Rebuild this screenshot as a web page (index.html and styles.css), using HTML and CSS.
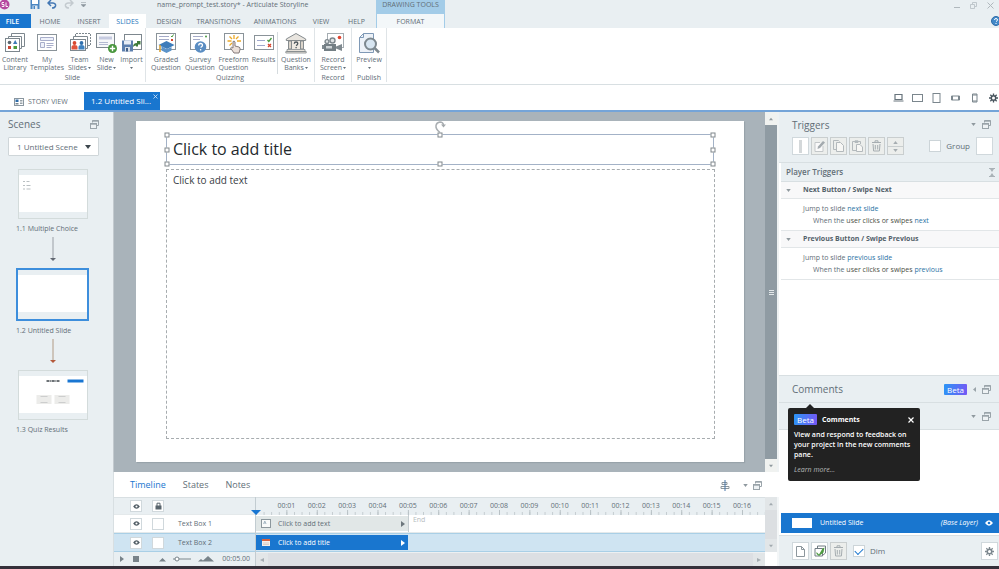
FILE: index.html
```html
<!DOCTYPE html>
<html lang="en">
<head>
<meta charset="utf-8">
<title>name_prompt_test.story* - Articulate Storyline</title>
<link rel="stylesheet" href="styles.css">
</head>
<body>
<svg class="defs" width="0" height="0" aria-hidden="true">
  <symbol id="panes" viewBox="0 0 9 9"><path d="M2.500 2.500V.5h6v5h-2" fill="none" stroke="#9aa4aa"/><path d="M2.500 1h6" stroke="#9aa4aa" stroke-width="1.400"/><rect x=".5" y="3.500" width="6" height="5" fill="#eef2f4" stroke="#9aa4aa"/><path d="M.5 4h6" stroke="#9aa4aa" stroke-width="1.400"/></symbol>
  <symbol id="down" viewBox="0 0 6 4"><path d="M0 0h6L3 4z" fill="currentColor"/></symbol>
  <symbol id="up" viewBox="0 0 6 4"><path d="M0 4h6L3 0z" fill="currentColor"/></symbol>
  <symbol id="eye" viewBox="0 0 8 6"><path d="M0 3Q4-2.400 8 3 4 8.400 0 3z" fill="currentColor"/><circle cx="4" cy="3" r="1.300" fill="var(--hole,#fff)"/></symbol>
  <symbol id="trash" viewBox="0 0 11 12"><path d="M1 2.500h9M4 2V.8h3V2M2 4l.6 7h5.800L9 4M4.300 5v4.500M6.700 5v4.500" fill="none" stroke="currentColor"/></symbol>
  <symbol id="gear" viewBox="0 0 12 12"><circle cx="6" cy="6" r="3" fill="none" stroke="currentColor" stroke-width="2"/><path d="M6 0v2.500M6 9.500V12M0 6h2.500M9.500 6H12M1.800 1.800l1.700 1.700M8.500 8.500l1.700 1.700M10.200 1.800L8.500 3.500M3.500 8.500l-1.700 1.700" stroke="currentColor" stroke-width="1.800"/></symbol>
</svg>

<header class="titlebar">
  <div class="quick">
    <svg class="logo" width="10" height="10" viewBox="0 0 10 10"><circle cx="4.500" cy="4.500" r="5" fill="#b5479f"/><path d="M4 2.500H2v2h2v2H1.800M6 2.500v4h2" fill="none" stroke="#fff" stroke-width=".9"/></svg>
    <button aria-label="Save"><svg width="10" height="10" viewBox="0 0 10 10"><path d="M.5 0h9v9h-9z" fill="#4b86c2"/><path d="M2 0h6v4H2z" fill="#fff"/><path d="M2.500 5.500h5V9h-5z" fill="#dfeaf4"/><path d="M3.500 6h1.500v3H3.500z" fill="#4b86c2"/></svg></button>
    <button aria-label="Undo"><svg width="10" height="9" viewBox="0 0 10 9"><path d="M4 0L1 3l3 3M1 3h5q3 .3 2.500 3Q8 8 5 8" fill="none" stroke="#4478b4" stroke-width="1.500"/></svg></button>
    <button aria-label="Redo"><svg width="10" height="9" viewBox="0 0 10 9"><path d="M6 0l3 3-3 3M9 3H4Q1 3.300 1.500 6 2 8 5 8" fill="none" stroke="#c3cacf" stroke-width="1.500"/></svg></button>
    <button aria-label="Customize"><svg width="5" height="6" viewBox="0 0 5 6"><path d="M0 .5h5M0 2.500h5L2.500 5z" fill="#8b959c" stroke="#8b959c" stroke-width=".5"/></svg></button>
  </div>
  <div class="doc-title">name_prompt_test.story* - Articulate Storyline</div>
  <div class="tools-label">DRAWING TOOLS</div>
  <div class="window-buttons">
    <button aria-label="Minimize"><svg width="7" height="8" viewBox="0 0 7 8"><path d="M1 6.500h6" stroke="#b0b8bd"/></svg></button>
    <button aria-label="Restore"><svg width="7" height="8" viewBox="0 0 7 8"><path d="M2.500 3V1.500h4v4H5M.5 3.500h4v4h-4z" fill="none" stroke="#b4bcc1" stroke-width=".8"/></svg></button>
    <button aria-label="Close"><svg width="7" height="8" viewBox="0 0 7 8"><path d="M.5 1.500l6 6m0-6l-6 6" stroke="#b0b8bd"/></svg></button>
  </div>
</header>

<nav class="menu">
  <button class="m-file">FILE</button><button class="m-home">HOME</button><button class="m-insert">INSERT</button><button class="m-slides">SLIDES</button><button class="m-design">DESIGN</button><button class="m-trans">TRANSITIONS</button><button class="m-anim">ANIMATIONS</button><button class="m-view">VIEW</button><button class="m-help">HELP</button><button class="m-format">FORMAT</button>
  <button class="m-q" aria-label="Help"><svg width="8" height="10" viewBox="0 0 8 10"><circle cx="5" cy="5" r="4.500" fill="#4389c9" stroke="#2f6ca8"/><path d="M3.500 4q0-1.500 1.500-1.500T6.500 4Q6.500 4.800 5 5.600M5 7v1" fill="none" stroke="#fff"/></svg></button>
</nav>

<section class="ribbon">
  <div class="group">
    <div class="items">
      <button class="w30"><svg width="22" height="22" viewBox="0 0 22 22"><path d="M7.500 4V1.500h13v13H18M4.500 7V4.500h13v12H16" fill="#fff" stroke="#7d878e"/><rect x="1.500" y="6.500" width="14" height="13" fill="#fff" stroke="#7d878e"/><circle cx="5.500" cy="10.500" r="1.800" fill="#5b6870"/><path d="M9 12l2.200-4 2.200 4z" fill="#3d7ab8"/><path d="M4 14h3v3H4z" fill="#c74634"/><path d="M9.500 14h3.500v3H9.500z" fill="#4c9b3c"/></svg><span>Content<br>Library</span></button>
      <button class="w34"><svg width="22" height="22" viewBox="0 0 22 22"><rect x="1.500" y="2.500" width="19" height="16" fill="#fff" stroke="#8a9399"/><path d="M4.500 5.500h13v3h-13zM4.500 10.500h4v5h-4z" fill="#eef1fa" stroke="#a8aecb"/><path d="M10.500 11.500h7M10.500 13.500h7M10.500 15.500h5" stroke="#a8aecb"/></svg><span>My<br>Templates</span></button>
      <button class="w31"><svg width="22" height="22" viewBox="0 0 22 22"><path d="M6.500 4V1.500h15v12H19" fill="#fff" stroke="#7d878e" stroke-dasharray="2 1"/><path d="M4.500 7V4.500h14v12H17" fill="#fff" stroke="#7d878e"/><rect x="1.500" y="7.500" width="15" height="11" fill="#fff" stroke="#7d878e"/><circle cx="5.500" cy="11" r="1.900" fill="#d8482f"/><path d="M2.500 17.500V15q0-2 3-2t3 2v2.500z" fill="#e2553c"/><circle cx="12.500" cy="11" r="1.900" fill="#2f6fad"/><path d="M9.500 17.500V15q0-2 3-2t3 2v2.500z" fill="#3f82c0"/></svg><span>Team<br>Slides<svg class="caret"><use href="#down"/></svg></span></button>
      <button class="w23"><svg width="22" height="22" viewBox="0 0 22 22"><rect x=".5" y="1.500" width="18" height="14" fill="#f7f8fa" stroke="#7d878e"/><path d="M3 4.500h13v3H3z" fill="#c6cbe0"/><path d="M3 10.500h9M3 12.500h9" stroke="#b4bad2"/><circle cx="16.500" cy="16.500" r="4.500" fill="#48963c"/><path d="M16.500 13.800v5.400M13.800 16.500h5.400" stroke="#fff" stroke-width="1.400"/></svg><span>New<br>Slide<svg class="caret"><use href="#down"/></svg></span></button>
      <button class="w27"><svg width="22" height="22" viewBox="0 0 22 22"><rect x="3.500" y="2.500" width="17" height="15" fill="#fff" stroke="#7d878e"/><path d="M12 15q0-4 4-4V9h3.500v3.500H17v2h-2v-1q-2 0-3 1.500z" fill="#3f7b3a"/><path d="M1 8.500h11v11H1z" fill="#5c7fae"/><path d="M3 8.500h7v4H3z" fill="#e7edf5"/><path d="M4 15h5v4.500H4z" fill="#d7dfe9"/><path d="M5 16h2v3.500H5z" fill="#405f87"/></svg><span>Import<br><svg class="caret"><use href="#down"/></svg></span></button>
    </div>
    <h2 class="gl">Slide</h2>
  </div>
  <div class="group">
    <div class="items quiz">
      <button class="w34"><svg width="22" height="22" viewBox="0 0 22 22"><rect x="1.500" y="1.500" width="19" height="16" fill="#fff" stroke="#8a9399"/><path d="M4 4.500h10M4 7.500h10" stroke="#a5abc8"/><path d="M16 4l1 1 1.500-2.500" fill="none" stroke="#4a9c3d"/><path d="M16 7l2 2m0-2l-2 2" stroke="#d5442c"/><path d="M3.500 13L11.500 9l8 4-7.500 4z" fill="#3d7cba"/><path d="M6.500 14v4.500l5 2.500 5-2.500V15l-5 2.300z" fill="#5b93c9"/><path d="M5 13v7" stroke="#d9a33a" stroke-width="1.600"/></svg><span>Graded<br>Question</span></button>
      <button class="w34"><svg width="22" height="22" viewBox="0 0 22 22"><rect x="1.500" y="1.500" width="19" height="16" fill="#fff" stroke="#8a9399"/><path d="M4 4.500h10M4 7.500h7" stroke="#a5abc8"/><circle cx="17" cy="4.500" r="1" fill="#4b9b40"/><circle cx="11.500" cy="15" r="5.800" fill="#5a8dc2"/><path d="M9.700 13.500q0-2 1.900-2t1.900 1.800q0 1.200-1.900 2.200M11.600 17v1.500" fill="none" stroke="#fff" stroke-width="1.300"/></svg><span>Survey<br>Question</span></button>
      <button class="w33"><svg width="22" height="22" viewBox="0 0 22 22"><rect x="1.500" y="1.500" width="19" height="16" fill="#fff" stroke="#8a9399"/><path d="M11 3v4M6.500 4.500L9 7M15.500 4.500L13 7M4.500 9h4M14 9h4M6.500 13.500L9 11" stroke="#eba928" stroke-width="1.300"/><path d="M10 9.500q1.500-1 2 .5v4l4 1q1.500.5 1 2.500l-1 3.500h-5l-3.500-5q.5-1.500 2.500 0z" fill="#eadfd9" stroke="#857b7a"/></svg><span>Freeform<br>Question</span></button>
      <button class="w27"><svg width="22" height="22" viewBox="0 0 22 22"><rect x="1.500" y="3.500" width="19" height="14" fill="#fff" stroke="#8a9399"/><path d="M4 8.500h8M4 13.500h8" stroke="#9fa7cb"/><path d="M14.500 8l1.300 1.500L18.500 6" fill="none" stroke="#4a9c3d" stroke-width="1.300"/><path d="M15 12l3 3m0-3l-3 3" stroke="#d5442c" stroke-width="1.300"/></svg><span>Results</span></button>
      <button class="w37 split"><svg width="22" height="22" viewBox="0 0 22 22"><path d="M1.300 7L11 1.500 20.700 7v1.500H1.300z" fill="#e9e5df" stroke="#858b8e"/><path d="M3.500 9h3v8h-3zM15.500 9h3v8h-3z" fill="#dcd5cb" stroke="#858b8e"/><path d="M7 9h8v8H7z" fill="#eee9e2"/><path d="M2 17.500h18v2H2zM.8 19.500h20.400V21H.8z" fill="#e7e2da" stroke="#858b8e" stroke-width=".8"/><path d="M9.300 11.700q0-1.700 1.800-1.700 1.700 0 1.700 1.500 0 1.200-1.700 2.200M11.100 15v1.300" fill="none" stroke="#4e575d" stroke-width="1.300"/></svg><span>Question<br>Banks<svg class="caret"><use href="#down"/></svg></span></button>
    </div>
    <h2 class="gl">Quizzing</h2>
  </div>
  <div class="group">
    <div class="items"><button class="w36"><svg width="22" height="22" viewBox="0 0 22 22"><rect x="5.500" y="1.500" width="16" height="14" fill="#fff" stroke="#a5adb2"/><circle cx="17.500" cy="5.500" r="1.800" fill="#df4632"/><circle cx="5" cy="9.500" r="1.900" fill="#dfe3e5" stroke="#7d878d" stroke-width="1.400"/><circle cx="10.500" cy="8.500" r="2.500" fill="#dfe3e5" stroke="#7d878d" stroke-width="1.400"/><path d="M2 12h12v7H2z" fill="#737e84"/><path d="M14 14.500l6-2.500v7l-6-2.500zM0 13h2v4H0z" fill="#7f898f"/><path d="M4 14h6v2.500H4z" fill="#cdd3d6"/></svg><span>Record<br>Screen<svg class="caret"><use href="#down"/></svg></span></button></div>
    <h2 class="gl">Record</h2>
  </div>
  <div class="group">
    <div class="items"><button class="w34"><svg width="22" height="22" viewBox="0 0 22 22"><path d="M1.500 5.500l4-4h10v19h-14z" fill="#edf2f8" stroke="#7f99b6"/><path d="M1.500 5.500h4v-4" fill="none" stroke="#7f99b6"/><circle cx="12.500" cy="12" r="5.500" fill="#d7e5f1" stroke="#7d888f" stroke-width="2"/><path d="M16.500 16l4.500 4.500" stroke="#7d888f" stroke-width="2.500"/></svg><span>Preview<br><svg class="caret"><use href="#down"/></svg></span></button></div>
    <h2 class="gl">Publish</h2>
  </div>
</section>

<div class="docbar">
  <button class="story"><svg width="10" height="8" viewBox="0 0 10 8"><rect x=".5" y=".5" width="9" height="7" fill="#fff" stroke="#8a969f"/><path d="M1.500 1.500h3V4h-3z" fill="#2c6ba8"/><path d="M1.500 5h3v1.500h-3z" fill="#7b8891"/><path d="M6 2.500h2.500M6 4h2.500M6 5.500h2.500" stroke="#7b8891" stroke-width=".8"/></svg>STORY VIEW</button>
  <div class="doctab"><span>1.2 Untitled Sli...</span><button aria-label="Close tab"><svg width="5" height="5" viewBox="0 0 5 5"><path d="M.5.5l4 4m0-4l-4 4" stroke="#dce9f7" stroke-width=".8"/></svg></button></div>
  <div class="devices">
    <button aria-label="Desktop"><svg width="11" height="10" viewBox="0 0 11 10"><path d="M2 1.500h7v5H2zM.5 8h10" fill="none" stroke="#68747c" stroke-width="1.200"/></svg></button>
    <button aria-label="Tablet landscape"><svg width="11" height="10" viewBox="0 0 11 10"><rect x=".5" y="1.500" width="10" height="7" fill="none" stroke="#7b868d"/></svg></button>
    <button aria-label="Tablet portrait"><svg width="11" height="10" viewBox="0 0 11 10"><rect x="2" y=".5" width="7" height="9" fill="none" stroke="#7b868d"/></svg></button>
    <button aria-label="Phone landscape"><svg width="11" height="10" viewBox="0 0 11 10"><path d="M1.500 3h8v4h-8zM2.500 3v4M8.500 3v4" fill="none" stroke="#7b868d"/></svg></button>
    <button aria-label="Phone portrait"><svg width="11" height="10" viewBox="0 0 11 10"><path d="M3.500 1h4.500v8H3.500zM3.500 2H8M3.500 8H8" fill="none" stroke="#7b868d"/></svg></button>
    <button class="dark" aria-label="Player settings"><svg width="9" height="10"><use href="#gear"/></svg></button>
  </div>
</div>

<main class="workspace">
  <aside class="scenes">
    <div class="scenes-head"><h1>Scenes</h1><button aria-label="Undock scenes"><svg width="9" height="9"><use href="#panes"/></svg></button></div>
    <div class="picker"><select aria-label="Scene"><option>1 Untitled Scene</option></select><svg width="6" height="4"><use href="#down"/></svg></div>
    <div class="thumb"><svg width="100%" height="100%" viewBox="0 0 67 37"><path d="M3.500 6.500h2M7 6.500h3M3.500 10.500h2M7 10.500h4M3.500 14h2M7 14h4" stroke="#b9bfc2"/></svg></div>
    <p>1.1 Multiple Choice</p>
    <svg class="arrow" width="8" height="26" viewBox="0 0 8 26"><path d="M4 0v23" stroke="#9a9fa6"/><path d="M1 21h6l-3 3z" fill="#626872"/></svg>
    <div class="thumb on"></div>
    <p>1.2 Untitled Slide</p>
    <svg class="arrow" width="8" height="26" viewBox="0 0 8 26"><path d="M4 0v23" stroke="#b19a84"/><path d="M1 21h6l-3 3z" fill="#b4593b"/></svg>
    <div class="thumb"><svg width="100%" height="100%" viewBox="0 0 67 37"><path d="M27 5h13" stroke="#3d4449" stroke-width="1.400" stroke-dasharray="3 .7 1 .5"/><path d="M48 3.500h16v3H48z" fill="#1976d2"/><path d="M17 19h15v9H17zM35 19h15v9H35z" fill="#ececea"/><path d="M21 20.500h7M39 20.500h7M21 26.500h7M39 26.500h7" stroke="#c5c7c7" stroke-width=".8"/></svg></div>
    <p>1.3 Quiz Results</p>
  </aside>

  <section class="center">
    <div class="stage">
      <div class="canvas">
        <div class="slide">
          <div class="title-box">Click to add title
            <svg class="rotate" width="12" height="15" viewBox="0 0 12 15"><path d="M5.500 15v-3Q1.500 9 2 5.500 2.500 2.500 6 2q3 0 3.500 3" fill="none" stroke="#a9aeb2" stroke-width="1.500"/><path d="M7 4.500h5L9.500 7.500z" fill="#a3a8ac"/></svg>
            <i class="h nw"></i><i class="h n"></i><i class="h ne"></i><i class="h w"></i><i class="h e"></i><i class="h sw"></i><i class="h s"></i><i class="h se"></i>
          </div>
          <div class="text-box">Click to add text</div>
        </div>
      </div>
      <div class="vscroll"><button aria-label="Scroll up"><svg width="4" height="4"><use href="#up"/></svg></button><div class="grip"></div><button aria-label="Scroll down"><svg width="4" height="4"><use href="#down"/></svg></button></div>
    </div>

    <div class="timeline">
      <div class="tl-head">
        <button class="on">Timeline</button><button>States</button><button>Notes</button>
        <span class="tl-icons"><svg class="align" width="10" height="11" viewBox="0 0 10 11"><path d="M2 2.500h5v2H2zM1 6.500h8v2H1z" fill="#fff" stroke="#8c969c"/><path d="M5 0v11" stroke="#4977a8"/></svg><svg class="c" width="5" height="3"><use href="#down"/></svg><svg width="9" height="9"><use href="#panes"/></svg></span>
      </div>
      <div class="tl-body">
        <div class="tl-names">
          <div class="tl-row ruler-name"><button class="sq" aria-label="Show or hide all"><svg width="7" height="5"><use href="#eye"/></svg></button><button class="sq" aria-label="Lock all"><svg width="7" height="8" viewBox="0 0 7 8"><path d="M.5 3.500h6v4h-6z" fill="#59656d"/><path d="M2 4V1.200h3V4" fill="none" stroke="#59656d"/></svg></button></div>
          <div class="tl-row"><button class="sq" aria-label="Show text box 1"><svg width="7" height="5"><use href="#eye"/></svg></button><button class="sq" aria-label="Lock text box 1"></button><span>Text Box 1</span></div>
          <div class="tl-row sel"><button class="sq" aria-label="Show text box 2"><svg width="7" height="5"><use href="#eye"/></svg></button><button class="sq" aria-label="Lock text box 2"></button><span>Text Box 2</span></div>
          <div class="tl-foot"><svg width="104" height="8" viewBox="0 0 104 8"><path d="M6 1l4 3-4 3zM19 1h6v6h-6zM45 6.500L48.500 3 52 6.500zM84 6.500L87 4l3 2.500zM88 6.500L94 1l6 5.500z" fill="#78838a"/><path d="M59 4h18" stroke="#8d979d" stroke-width="1.200"/><circle cx="63" cy="4" r="2" fill="#fff" stroke="#78838a"/></svg><span>00:05.00</span></div>
        </div>
        <div class="tl-tracks">
          <div class="ruler"><svg class="playhead" width="10" height="5" viewBox="0 0 10 5"><path d="M0 0h10L5 5z" fill="#1976d2"/></svg><span>00:01</span><span>00:02</span><span>00:03</span><span>00:04</span><span>00:05</span><span>00:06</span><span>00:07</span><span>00:08</span><span>00:09</span><span>00:10</span><span>00:11</span><span>00:12</span><span>00:13</span><span>00:14</span><span>00:15</span><span>00:16</span></div>
          <div class="track"><div class="clip"><svg width="10" height="9" viewBox="0 0 10 9"><rect x=".5" y=".5" width="9" height="8" fill="#f8fafa" stroke="#8c979d"/><path d="M2.500 5l1.300-3 1.300 3M3 4h1.600" stroke="#8da3b3" fill="none" stroke-width=".7"/></svg><span>Click to add text</span><b></b></div><em>End</em></div>
          <div class="track sel"><div class="clip"><svg width="10" height="9" viewBox="0 0 10 9"><path d="M1 1h8v7H1z" fill="#f4eeea"/><path d="M1 1h8v2H1z" fill="#d8623f"/><path d="M2 5h6M2 6.500h6" stroke="#c4b7b0" stroke-width=".6"/></svg><span>Click to add title</span><b></b></div></div>
          <div class="hscroll"><button aria-label="Scroll left"><i class="l"></i></button><button aria-label="Scroll right"><i class="r"></i></button></div>
        </div>
        <div class="tl-scroll"><div><button aria-label="Timeline up"><svg width="4" height="4"><use href="#up"/></svg></button><button aria-label="Timeline down"><svg width="4" height="4"><use href="#down"/></svg></button></div></div>
      </div>
    </div>
  </section>

  <aside class="side">
    <div class="trig-head">
      <div class="ph"><h1>Triggers</h1><svg class="c" width="5" height="3"><use href="#down"/></svg><svg width="9" height="9"><use href="#panes"/></svg></div>
      <div class="tools">
        <button class="white" aria-label="New trigger"><svg width="5" height="13" viewBox="0 0 5 13"><path d="M1 0h3v13H1z" fill="#d4d8da"/></svg></button>
        <button aria-label="Edit trigger"><svg width="11" height="12" viewBox="0 0 11 12"><path d="M9 6v5.500H1v-9h5" fill="#fafafa" stroke="#c3c7c9"/><path d="M3.500 9l.5-2.500L9 1l2 1.500-5 5.500z" fill="#a3aaae"/></svg></button>
        <button aria-label="Copy trigger"><svg width="11" height="12" viewBox="0 0 11 12"><path d="M3 9.500H.5v-9h5l1 1" fill="none" stroke="#b3b9bc"/><path d="M3.500 2.500h4l3 3v6h-7z" fill="#f7f7f5" stroke="#b3b9bc"/></svg></button>
        <button aria-label="Paste trigger"><svg width="11" height="12" viewBox="0 0 11 12"><path d="M4 10.500H.5v-9h8V4M3 2.500V.8h3v1.700z" fill="none" stroke="#b3b9bc"/><path d="M4.500 4.500h3.500l2.500 2.500v4.500h-6z" fill="#f7f7f5" stroke="#b3b9bc"/></svg></button>
        <button aria-label="Delete trigger"><svg width="11" height="12"><use href="#trash"/></svg></button>
        <div class="updown"><button aria-label="Move up"><svg width="5" height="3"><use href="#up"/></svg></button><button aria-label="Move down"><svg width="5" height="3"><use href="#down"/></svg></button></div>
        <label class="group-check"><input type="checkbox">Group</label>
        <button class="white vars" aria-label="Variables"></button>
      </div>
    </div>
    <div class="inset">
      <div class="player"><h2>Player Triggers</h2><svg width="6" height="9" viewBox="0 0 6 9"><path d="M0 .5h6M0 8.500h6" stroke="#a9b2b7"/><path d="M1 1h4L3 4zM1 8h4L3 5z" fill="#a9b2b7"/></svg></div>
      <div class="th"><svg width="5" height="3"><use href="#down"/></svg><h3>Next Button / Swipe Next</h3></div>
      <div class="tb"><p>Jump to slide <a href="#next">next slide</a></p><p class="in">When the <b>user clicks or swipes</b> <a href="#next">next</a></p></div>
      <div class="th"><svg width="5" height="3"><use href="#down"/></svg><h3>Previous Button / Swipe Previous</h3></div>
      <div class="tb prev"><p>Jump to slide <a href="#prev">previous slide</a></p><p class="in">When the <b>user clicks or swipes</b> <a href="#prev">previous</a></p></div>
    </div>
    <div class="ph bar"><h1>Comments</h1><span class="beta">Beta</span><svg class="c" width="3" height="5" viewBox="0 0 3 5"><path d="M3 0v5L0 2.500z" fill="#9aa4aa"/></svg><svg width="9" height="9"><use href="#panes"/></svg>
      <div class="pop" role="dialog" aria-label="Comments">
        <div class="pop-head"><span class="beta">Beta</span><strong>Comments</strong><button aria-label="Close"><svg width="6" height="6" viewBox="0 0 6 6"><path d="M.5.5l5 5m0-5l-5 5" stroke="#fff" stroke-width="1.200"/></svg></button></div>
        <p>View and respond to feedback on your project in the new comments pane.</p>
        <a href="#more">Learn more...</a>
      </div>
    </div>
    <div class="ph bar"><svg class="c" width="5" height="3"><use href="#down"/></svg><svg width="9" height="9"><use href="#panes"/></svg></div>
    <div class="layers"><div class="layer"><i></i><span>Untitled Slide</span><em>(Base Layer)</em><svg width="8" height="6"><use href="#eye"/></svg></div></div>
    <div class="layer-tools">
      <button class="white" aria-label="New layer"><svg width="9" height="11" viewBox="0 0 9 11"><path d="M.5.5h5l3 3v7h-8zM5.500.5v3h3" fill="#fff" stroke="#8d979d"/></svg></button>
      <button class="white" aria-label="Duplicate layer"><svg width="12" height="12" viewBox="0 0 12 12"><path d="M3.500 3V1h8v7L8.500 10.500M1 3.500h7.500V11H1z" fill="#fff" stroke="#717c83"/><path d="M2.500 7L5 9.500 8.500 3.500l2-1-1 5L5 11 2.500 9z" fill="#4e9b42"/></svg></button>
      <button aria-label="Delete layer"><svg width="11" height="12"><use href="#trash"/></svg></button>
      <label class="dim"><input type="checkbox" checked>Dim</label>
      <button class="white end" aria-label="Layer settings"><svg width="9" height="9"><use href="#gear"/></svg></button>
    </div>
  </aside>
</main>
<footer class="taskbar"></footer>
</body>
</html>
```

FILE: styles.css
```css
:root {
  --panel: #e9eff2;
  --blue: #1976cf;
  --line: #d8dfe2;
  --text: #626e77;
}
* { box-sizing: border-box; }
body {
  margin: 0;
  min-height: 100vh;
  display: flex;
  flex-direction: column;
  font: 7px/8px "Open Sans", "Noto Sans", sans-serif;
  color: var(--text);
  background: #fff;
  overflow-x: hidden;
}
button { font: inherit; color: inherit; border: 0; padding: 0; background: none; }
h1, h2, h3, p { margin: 0; font: inherit; }
h1 { font-size: 10px; line-height: 12px; }
a { color: #2b73a5; text-decoration: none; }
svg { display: block; flex: none; }
.defs { position: absolute; }

/* title bar */
.titlebar { display: flex; height: 14px; background: var(--panel); line-height: 10px; }
.quick { display: flex; align-items: flex-start; width: 157px; }
.quick button { margin-right: 7px; }
.quick .logo { margin-right: 20px; }
.quick button:last-child { margin: 2px 0 0 0; }
.doc-title { width: 219px; white-space: nowrap; }
.tools-label { width: 69px; background: #a3cce8; text-align: center; white-space: nowrap; }
.window-buttons { display: flex; align-items: flex-start; gap: 10px; margin-left: auto; padding: 1px 5px 0 0; }

/* menu */
.menu { display: flex; height: 14px; background: var(--panel); line-height: 15px; }
.menu button { flex: none; white-space: nowrap; }
.menu .m-file { width: 31px; padding-right: 6px; background: var(--blue); color: #fff; font-weight: 600; }
.m-home { width: 38px; }
.m-insert { width: 40px; }
.menu .m-slides { width: 37px; background: #fff; color: #2675bb; }
.m-design { width: 46px; }
.m-trans { width: 53px; }
.m-anim { width: 60px; }
.m-view { width: 32px; }
.m-help { width: 39px; }
.menu .m-format { width: 69px; background: #f3f7f9; border: solid #a3cce8; border-width: 0 1px; }
.menu .m-q { margin-left: auto; }

/* ribbon */
.ribbon { display: flex; height: 57px; border-bottom: 1px solid var(--line); }
.group { display: flex; flex-direction: column; border-right: 1px solid #dfe4e7; margin-bottom: 2px; }
.items { display: flex; height: 46px; padding-top: 4px; }
.items.quiz { padding-left: 3px; }
.items button { display: flex; flex-direction: column; align-items: center; gap: 2px; }
.items span { white-space: nowrap; text-align: center; }
.caret { display: inline-block; width: 3px; height: 2px; margin-left: 1px; vertical-align: 1px; }
.gl { text-align: center; }
.w23 { width: 23px; }
.w27 { width: 27px; }
.w30 { width: 30px; }
.w31 { width: 31px; }
.w33 { width: 33px; }
.w34 { width: 34px; }
.w36 { width: 36px; }
.w37 { width: 37px; }
.split { border-left: 1px solid #d5dbde; }

/* document tabs */
.docbar { display: flex; height: 27px; border-bottom: 2px solid #74a4d8; background: #fff; }
.story { display: flex; align-items: center; gap: 4px; width: 84px; padding: 8px 0 0 14px; white-space: nowrap; }
.doctab { display: flex; justify-content: space-between; align-items: flex-start; width: 76px; margin-top: 7px; padding: 2px 2px 0 7px; background: var(--blue); color: #fff; font-size: 8px; line-height: 14px; white-space: nowrap; }
.devices { display: flex; gap: 8px; align-items: center; margin-left: auto; padding-right: 1px; }
.devices .dark { margin-left: 1px; color: #46535c; }

/* workspace */
.workspace { flex: 1; display: flex; min-height: 0; }
.scenes { width: 113px; background: var(--panel); display: flex; flex-direction: column; align-items: flex-start; padding: 6px 14px 0 8px; }
.scenes-head { display: flex; justify-content: space-between; align-items: center; width: 91px; }
.picker { position: relative; width: 91px; margin: 7px 0 13px; }
.picker select { display: block; appearance: none; width: 100%; height: 19px; border: 1px solid #cfd6d9; border-radius: 1px; background: #fff; padding: 0 8px; font: 8px/16px "Open Sans", sans-serif; color: var(--text); }
.picker svg { position: absolute; right: 8px; top: 8px; color: #3c464d; }
.thumb { width: 70px; height: 50px; margin-left: 10px; border: 1px solid #d3dbdb; background: linear-gradient(var(--panel) 5px, #fff 5px, #fff 42px, var(--panel) 42px); padding: 5px 0 6px; }
.thumb.on { width: 73px; height: 53px; margin-left: 8px; border: 2px solid #3d8edc; background: linear-gradient(var(--panel) 5px, #fff 5px, #fff 42px, var(--panel) 42px); }
.scenes p { margin: 5px 0 4px 8px; line-height: 9px; white-space: nowrap; }
.arrow { margin: 0 0 5px 41px; }

.center { flex: 1; min-width: 0; display: flex; flex-direction: column; }
.stage { flex: 1; display: flex; background: #a9b3ba; border-left: 1px solid #c3cacf; }
.canvas { flex: 1; display: flex; padding: 9px 21px 10px 22px; }
.slide { flex: 1; display: flex; flex-direction: column; background: #fff; padding: 13px 29px 23px 30px; font-family: "Open Sans", sans-serif; color: #3a4045; box-shadow: 1px 1px 1px #98a3aa; }
.title-box { position: relative; height: 31px; margin-right: 1px; border: 1px solid #a3b2c7; padding: 0 6px; font-size: 16px; line-height: 28px; color: #24292d; }
.text-box { flex: 1; margin-top: 4px; border: 1px dashed #a7acaf; padding: 4px 6px; font-size: 10px; line-height: 13px; }
.h { position: absolute; width: 5px; height: 5px; border: 1px solid #80878c; background: #fff; transform: translate(-50%, -50%); }
.nw { left: 0; top: 0; } .n { left: 50%; top: 0; } .ne { left: 100%; top: 0; }
.w { left: 0; top: 50%; } .e { left: 100%; top: 50%; }
.sw { left: 0; top: 100%; } .s { left: 50%; top: 100%; } .se { left: 100%; top: 100%; }
.rotate { position: absolute; left: calc(50% - 6px); bottom: 100%; }
.vscroll { width: 14px; display: flex; flex-direction: column; justify-content: space-between; align-items: center; background: #8f9ba3; border-right: 2px solid #eef2f3; }
.vscroll button { width: 100%; height: 13px; display: grid; place-items: center; background: #f0f2f0; color: #8f999e; }
.grip { width: 5px; height: 5px; background: repeating-linear-gradient(#e3e8ea 0 1px, transparent 1px 2px); }

/* timeline */
.timeline { border-left: 1px solid var(--line); background: #fff; }
.tl-head { display: flex; align-items: center; gap: 17px; height: 25px; padding: 1px 17px 0 16px; font-size: 9px; }
.tl-head .on { color: var(--blue); }
.tl-icons { display: flex; align-items: center; margin-left: auto; gap: 5px; }
.align { margin-right: 8px; }
.c { color: #8f999f; }
.tl-body { display: flex; background: var(--panel); }
.tl-names { width: 141px; }
.tl-row { display: flex; align-items: center; gap: 10px; height: 18px; padding-left: 16px; background: #fff; border-bottom: 1px solid #e4e9eb; }
.tl-row.ruler-name { background: var(--panel); border-top: 1px solid var(--line); }
.tl-row span { padding-left: 4px; }
.tl-row.sel { height: 19px; background: #cfe4f2; border: solid #a9cfe6; border-width: 1px 0; }
.sq { width: 12px; height: 12px; display: grid; place-items: center; border: 1px solid #d0d8dc; background: #fff; color: #4e5a62; }
.tl-foot { display: flex; align-items: center; justify-content: space-between; height: 14px; padding-right: 5px; }
.tl-tracks { flex: 1; min-width: 0; border-left: 1px solid #c2ccd1; }
.ruler { position: relative; display: flex; height: 18px; padding: 4px 0 0 calc(100% / 33.5); border-top: 1px solid var(--line);
  background:
    linear-gradient(90deg, #b8c1c5 1px, transparent 1px) 0 100% / calc(100% / 16.75) 5px repeat-x,
    linear-gradient(90deg, #c3cbcf 1px, transparent 1px) 0 100% / calc(100% / 67) 3px repeat-x; }
.ruler span { flex: 0 0 calc(100% / 16.25); text-align: center; }
.playhead { position: absolute; left: -5px; bottom: 0; }
.track { display: flex; height: 18px; background: #fff; border-bottom: 1px solid #e4e9eb; }
.track em { padding: 1px 4px; font-style: normal; color: #b5bcc0; border-left: 1px solid #c5cdd1; }
.clip { display: flex; align-items: center; gap: 7px; width: calc(500% / 16.75); padding: 0 3px 0 5px; margin: 1px 0; background: #e1e7e7; }
.clip b { margin-left: auto; border: solid transparent; border-width: 3px 0 3px 4px; border-left-color: #6d777d; }
.track.sel { height: 19px; background: #cfe4f2; border: solid #a9cfe6; border-width: 1px 0; }
.sel .clip { background: var(--blue); color: #fff; }
.sel .clip b { border-left-color: #fff; }
.hscroll { display: flex; justify-content: space-between; height: 14px; background: #dcdfe3; border-top: 1px solid #edf0f2; }
.hscroll button { width: 12px; display: grid; place-items: center; background: #e2e6e8; }
.hscroll i { border: 2px solid transparent; }
.hscroll .l { border-right: 4px solid #a5adb2; border-left: 0; }
.hscroll .r { border-left: 4px solid #a5adb2; border-right: 0; }
.tl-scroll { width: 14px; border-right: 2px solid #f3f6f7; background: #fff; }
.tl-scroll div { display: flex; flex-direction: column; justify-content: space-between; height: 55px; background: #dcdfe2; }
.tl-scroll button { height: 13px; display: grid; place-items: center; color: #a2aaaf; background: #e2e6e8; }

/* right-hand panels */
.side { width: 220px; display: flex; flex-direction: column; background: #fff; }
.trig-head { height: 51px; background: var(--panel); border-bottom: 1px solid var(--line); }
.ph { display: flex; align-items: center; gap: 6px; height: 25px; padding: 0 8px 0 13px; }
.ph h1 { margin-right: auto; }
.ph .c:first-child { margin-left: auto; }
.bar { position: relative; height: 27px; background: var(--panel); border-top: 1px solid var(--line); }
.tools { display: flex; align-items: center; gap: 2px; padding: 0 6px 0 13px; }
.tools > button, .updown, .layer-tools > button { width: 17px; height: 18px; display: grid; place-items: center; border: 1px solid #c9cecf; background: #eceeec; color: #a6adb1; }
.updown button { width: 100%; height: 8px; display: grid; place-items: center; }
.updown button + button { border-top: 1px solid #c9cecf; }
.tools > .white, .layer-tools > .white { background: #fff; border-color: #d0d8dc; }
label { display: flex; align-items: center; gap: 5px; font-size: 8px; }
input[type="checkbox"] { appearance: none; width: 12px; height: 12px; margin: 0; border: 1px solid #ccd4d8; background: #fff; }
input:checked { display: grid; place-items: center; }
input:checked::before { content: ""; width: 7px; height: 4px; border: solid var(--blue); border-width: 0 0 1px 1px; transform: rotate(-45deg); margin-bottom: 2px; }
.group-check { margin-left: auto; margin-right: 4px; }
.inset { flex: 1; margin-left: 2px; min-height: 212px; }
.player { display: flex; justify-content: space-between; align-items: center; height: 19px; padding: 0 4px 0 5px; background: var(--panel); border-bottom: 1px solid var(--line); font-size: 8px; }
.player h2 { font-weight: 600; }
.th { display: flex; align-items: center; gap: 12px; height: 17px; padding-left: 5px; background: #f8f8f9; border-bottom: 1px solid #e2e6e8; color: #8f999e; }
.th h3 { font-weight: 700; color: #53616a; }
.tb { height: 32px; padding: 4px 0 0 22px; border-bottom: 1px solid #e2e6e8; line-height: 12px; }
.tb b { font-weight: 400; color: #4a4f45; }
.tb .in { padding-left: 10px; }
.beta { padding: 0 3px; font-size: 8px; line-height: 11px; color: #fff; border-radius: 1px; background: linear-gradient(100deg, #2a96f5, #7657f5); }
.pop { position: absolute; z-index: 2; left: 9px; top: 32px; width: 132px; height: 73px; padding: 6px 6px; border-radius: 2px; background: #222; color: #fff; line-height: 10px; }
.pop::before { content: ""; position: absolute; left: 18px; top: -4px; border: solid transparent; border-width: 0 4px 4px; border-bottom-color: #222; }
.pop-head { display: flex; align-items: center; gap: 5px; margin-bottom: 5px; }
.pop-head button { margin-left: auto; }
.pop p { margin-bottom: 5px; font-weight: 600; }
.pop a { color: #b8babb; font-style: italic; }
.layers { height: 106px; display: flex; align-items: flex-end; padding: 0 0 2px 2px; border-top: 1px solid var(--line); }
.layer { flex: 1; display: flex; align-items: center; height: 20px; padding: 0 6px 0 11px; background: var(--blue); color: #fff; --hole: var(--blue); }
.layer i { width: 20px; height: 10px; margin-right: 8px; background: #fff; }
.layer em { margin: 0 7px 0 auto; }
.layer-tools { display: flex; align-items: center; gap: 2px; height: 31px; padding: 0 1px 0 13px; background: var(--panel); border-top: 1px solid var(--line); }
.dim { margin-left: 4px; }
.layer-tools .end { margin-left: auto; color: #7b868d; }
.taskbar { height: 3px; background: #35303a; }
```
